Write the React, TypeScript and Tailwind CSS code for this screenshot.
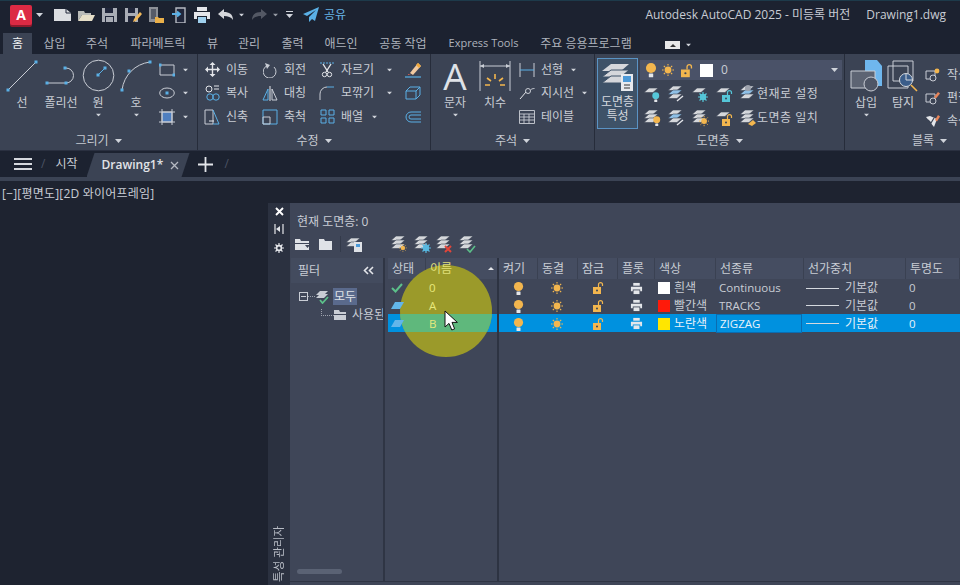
import type { ReactNode } from "react";

const LIGHT = "#e4e6ea";
const LINE = "#c9cdd5";
const BLUE = "#5ab0e6";
const ORANGE = "#f3b64e";

function Svg({ w = 16, h = 16, children }: { w?: number; h?: number; children: ReactNode }) {
  return (
    <svg width={w} height={h} viewBox={`0 0 ${w} ${h}`} fill="none" className="shrink-0">
      {children}
    </svg>
  );
}

function Dot({ x, y }: { x: number; y: number }) {
  return <rect x={x - 1.5} y={y - 1.5} width={3} height={3} fill={BLUE} />;
}

function Caret({ className = "" }: { className?: string }) {
  return (
    <svg width="7" height="4" viewBox="0 0 7 4" className={`shrink-0 ${className}`}>
      <path d="M0 0h7L3.5 4z" fill="#cfd3da" />
    </svg>
  );
}

function Bulb({ x = 0, y = 0, s = 1, c = ORANGE }: { x?: number; y?: number; s?: number; c?: string }) {
  return (
    <g transform={`translate(${x} ${y}) scale(${s})`}>
      <circle cx="5" cy="5" r="4.6" fill={c} />
      <rect x="3" y="10" width="4" height="3.4" rx="0.5" fill={LIGHT} />
    </g>
  );
}

function Sun({ x = 0, y = 0, s = 1, c = ORANGE }: { x?: number; y?: number; s?: number; c?: string }) {
  return (
    <g transform={`translate(${x} ${y}) scale(${s})`}>
      <circle cx="6" cy="6" r="3.4" fill={c} />
      <path d="M6 0v1.6M6 10.4V12M0 6h1.6M10.4 6H12M1.8 1.8l1.2 1.2M9 9l1.2 1.2M10.2 1.8L9 3M3 9l-1.2 1.2" stroke={c} strokeWidth="1.1" />
    </g>
  );
}

function Lock({ x = 0, y = 0, s = 1, c = ORANGE }: { x?: number; y?: number; s?: number; c?: string }) {
  return (
    <g transform={`translate(${x} ${y}) scale(${s})`}>
      <rect x="0" y="5" width="8" height="7" fill={c} />
      <circle cx="4" cy="8.4" r="1" fill="#3b4354" />
      <path d="M5.5 5V2.6a2 2 0 0 1 4 0V4" stroke={c} strokeWidth="1.2" />
    </g>
  );
}

function Printer({ size = 14 }: { size?: number }) {
  return (
    <svg width={size} height={size} viewBox="0 0 14 14" className="shrink-0">
      <path d="M3.5 1h7v3h-7z" fill={LIGHT} />
      <path d="M1 5h12v5h-2V8H3v2H1z" fill={LIGHT} />
      <path d="M3.8 9h6.4v4H3.8z" fill={LIGHT} />
    </svg>
  );
}

// stacked layer sheets, with the overlay badge passed as children
function Stack({ n = 3, tint, children }: { n?: number; tint?: boolean; children?: ReactNode }) {
  const ys = n === 1 ? [3] : n === 2 ? [3, 7] : [1, 5, 9];
  return (
    <Svg w={18} h={18}>
      {ys.map((y, i) => (
        <path
          key={y}
          d={`M6 ${y}h9l-5 4.5H1z`}
          fill={tint && i === 1 ? "#8fc0e6" : "#d5d7db"}
          stroke="#3b4354"
          strokeWidth="0.6"
        />
      ))}
      {children}
    </Svg>
  );
}

function Gear({ x, y, c }: { x: number; y: number; c: string }) {
  return (
    <g>
      <circle cx={x} cy={y} r="3.2" fill={c} />
      <path d={`M${x} ${y - 5}v10M${x - 5} ${y}h10M${x - 3.5} ${y - 3.5}l7 7M${x + 3.5} ${y - 3.5}l-7 7`} stroke={c} strokeWidth="1.2" />
    </g>
  );
}

// --- title bar ---
function QuickAccess() {
  return (
    <div className="flex items-center">
      <div className="ml-[10px] flex h-[20px] w-[22px] items-center justify-center rounded-[2px] bg-[#dc2a44] text-[14px] font-bold text-white shadow-[0_2px_0_#8e1a2c]">
        A
      </div>
      <Caret className="ml-[4px]" />
      <div className="ml-[11px] flex items-center gap-[6.5px]">
        <Svg w={17} h={14}>
          <path d="M0 1h12l5 4v8H0z" fill="#dcdee2" />
          <path d="M12 1v4h5" stroke="#20263a" />
        </Svg>
        <Svg w={17} h={14}>
          <path d="M0 3h6l1 2h6v2H4l-4 6z" fill="#b9bbb8" />
          <path d="M4 7h13l-3 6H0z" fill="#e6dfc8" />
        </Svg>
        <Svg w={17} h={16}>
          <path d="M1 1h15v14H1z" fill="#a9adb5" />
          <path d="M4 1h8v5H4zM4 9h9v6H4z" fill="#20263a" />
          <path d="M5 10h7v5H5z" fill="#a9adb5" />
        </Svg>
        <Svg w={17} h={16}>
          <path d="M0 1h13v14H0z" fill="#a9adb5" />
          <path d="M3 1h7v5H3zM3 9h7v6H3z" fill="#20263a" />
          <path d="M8 15l1-3 6-7 2 2-6 7z" fill="#f0b85a" />
        </Svg>
        <Svg w={16} h={16}>
          <path d="M1 0h9v15H1z" fill="#8d9097" />
          <path d="M3 2h5v10H3z" fill="#565b68" />
          <path d="M7 10h3l1 1h5v5H7z" fill="#eab04a" />
        </Svg>
        <Svg w={16} h={16}>
          <path d="M5 1h9v15H5z" fill="#20263a" stroke="#b5b9c1" strokeWidth="1.4" />
          <path d="M1 7h7M6 4.5L9 7l-3 2.5" stroke={BLUE} strokeWidth="1.8" />
        </Svg>
        <Svg w={18} h={16}>
          <path d="M4 0h10v4H4z" fill={LIGHT} />
          <path d="M1 5h16v7h-3V9H4v3H1z" fill={LIGHT} />
          <path d="M5 10h8v6H5z" fill="#9fd0ee" />
        </Svg>
      </div>
      <div className="ml-[6px]">
        <Svg w={16} h={12}>
          <path d="M0 5l6-5v3c5 0 9 2 9 8-2-3-5-4-9-4v3z" fill="#d5d7db" transform="translate(1 0)" />
        </Svg>
      </div>
      <Caret className="ml-[5px] scale-75" />
      <div className="ml-[7px] opacity-50">
        <Svg w={16} h={12}>
          <path d="M15 5L9 0v3C4 3 0 5 0 11c2-3 5-4 9-4v3z" fill="#8b8f99" />
        </Svg>
      </div>
      <Caret className="ml-[4px] scale-75 opacity-70" />
      <div className="ml-[7px] flex flex-col items-center gap-[2px]">
        <span className="h-[1.5px] w-[7px] bg-[#cfd3da]" />
        <Caret />
      </div>
      <div className="ml-[10px]">
        <Svg w={16} h={15}>
          <path d="M16 0L0 7l4 2 9-6-7 7v5l3-3 3 2z" fill="#5ab0e6" />
        </Svg>
      </div>
      <span className="ml-[5px] text-[12px] text-[#66b4e6]">공유</span>
    </div>
  );
}

function TitleBar() {
  return (
    <div className="flex h-[33px] items-center justify-between border-t border-[#1d3a4a] bg-[#1c2230] pb-[5px]">
      <QuickAccess />
      <div className="flex pr-[14px] text-[12px] text-[#c8ccd4]">
        <span>Autodesk AutoCAD 2025 - 미등록 버전</span>
        <span className="ml-[16px]">Drawing1.dwg</span>
      </div>
    </div>
  );
}

const tabs = [
  { label: "홈", cls: "ml-[3px] w-[29px] bg-[#3b4354] text-[#eef0f3]" },
  { label: "삽입", cls: "ml-[11px] w-[23px]" },
  { label: "주석", cls: "ml-[20px] w-[22px]" },
  { label: "파라메트릭", cls: "ml-[21px] w-[58px]" },
  { label: "뷰", cls: "ml-[20px] w-[11px]" },
  { label: "관리", cls: "ml-[20px] w-[22px]" },
  { label: "출력", cls: "ml-[21px] w-[23px]" },
  { label: "애드인", cls: "ml-[20px] w-[34px]" },
  { label: "공동 작업", cls: "ml-[20px] w-[50px]" },
  { label: "Express Tools", cls: "ml-[21px] w-[69px] text-[11px]" },
  { label: "주요 응용프로그램", cls: "ml-[19px] w-[98px]" },
];

function RibbonTabs() {
  return (
    <div className="flex h-[21px] items-stretch bg-[#1c2230] text-[12px] text-[#aeb3bd]">
      {tabs.map((t) => (
        <div key={t.label} className={`flex items-center justify-center whitespace-nowrap ${t.cls}`}>
          {t.label}
        </div>
      ))}
      <div className="ml-[30px] mt-[8px] flex h-[8px] w-[15px] items-center justify-center bg-[#e8e8e8]">
        <span className="h-0 w-0 border-x-[3px] border-b-[3px] border-x-transparent border-b-[#333]" />
      </div>
      <Caret className="ml-[5px] mt-[10px] scale-75" />
    </div>
  );
}

// --- ribbon ---
function Panel({ title, cls, children }: { title: string; cls: string; children: ReactNode }) {
  return (
    <div className={`flex shrink-0 flex-col border-r border-[#262c3a] ${cls}`}>
      <div className="flex h-[78px]">{children}</div>
      <div className="flex h-[18px] items-center justify-center gap-[6px] text-[12px] text-[#c5c9d1]">
        {title}
        <Caret />
      </div>
    </div>
  );
}

function BigTool({ cls, icon, label, caret }: { cls: string; icon: ReactNode; label: string; caret?: boolean }) {
  return (
    <div className={`flex shrink-0 flex-col items-center ${cls}`}>
      <div className="flex h-[33px] items-center">{icon}</div>
      <span className="mt-[3px] whitespace-nowrap text-[12px] leading-[15px] text-[#c9cdd5]">{label}</span>
      {caret && <Caret className="mt-[3px] scale-75" />}
    </div>
  );
}

function Row({ icon, text, caret, caretCls = "" }: { icon: ReactNode; text?: string; caret?: boolean; caretCls?: string }) {
  return (
    <div className="flex h-[23.5px] items-center">
      <div className="flex w-[18px] justify-center">{icon}</div>
      {text && <span className="ml-[5px] whitespace-nowrap text-[12px] text-[#c9cdd5]">{text}</span>}
      {caret && <Caret className={`scale-75 ${caretCls}`} />}
    </div>
  );
}

function DrawPanel() {
  return (
    <Panel title="그리기" cls="w-[198px]">
      <div className="flex pt-[5px]">
        <BigTool
          cls="ml-[5px] w-[34px]"
          label="선"
          icon={
            <Svg w={32} h={32}>
              <path d="M2 30L30 2" stroke={LINE} strokeWidth="1" />
              <Dot x={2} y={30} />
              <Dot x={30} y={2} />
            </Svg>
          }
        />
        <BigTool
          cls="ml-[4px] w-[36px]"
          label="폴리선"
          icon={
            <Svg w={34} h={20}>
              <path d="M3 17h19a7.5 7.5 0 0 0 0-15h-2" stroke={LINE} />
              <Dot x={3} y={17} />
              <Dot x={22} y={17} />
              <Dot x={21} y={2} />
            </Svg>
          }
        />
        <BigTool
          cls="ml-[1px] w-[36px]"
          label="원"
          caret
          icon={
            <Svg w={33} h={33}>
              <circle cx="16.5" cy="16.5" r="15.3" stroke={LINE} />
              <path d="M16 16l7-7" stroke={BLUE} />
              <Dot x={16} y={16} />
              <Dot x={23} y={9} />
            </Svg>
          }
        />
        <BigTool
          cls="ml-[2px] w-[36px]"
          label="호"
          caret
          icon={
            <Svg w={32} h={32}>
              <path d="M2 30C4 15 15 4 30 2" stroke={LINE} />
              <Dot x={2} y={30} />
              <Dot x={9} y={11} />
              <Dot x={30} y={2} />
            </Svg>
          }
        />
      </div>
      <div className="ml-[4px] flex flex-col pt-[4px]">
        <Row
          caret
          caretCls="ml-[6px]"
          icon={
            <Svg w={16} h={14}>
              <path d="M1 2h14v10H1z" stroke={LINE} />
              <Dot x={1} y={2} />
              <Dot x={15} y={12} />
            </Svg>
          }
        />
        <Row
          caret
          caretCls="ml-[6px]"
          icon={
            <Svg w={16} h={12}>
              <ellipse cx="8" cy="6" rx="7.3" ry="5" stroke={LINE} />
              <Dot x={8} y={6} />
            </Svg>
          }
        />
        <Row
          caret
          caretCls="ml-[6px]"
          icon={
            <Svg w={16} h={16}>
              <path d="M3 3h10v10H3z" fill="#4f7fc0" stroke={LINE} />
              <path d="M0 3h16M0 13h16M3 0v16M13 0v16" stroke={LINE} />
            </Svg>
          }
        />
      </div>
    </Panel>
  );
}

function ModifyPanel() {
  return (
    <Panel title="수정" cls="w-[233px]">
      <div className="flex pl-[5px] pt-[4px]">
        <div className="w-[58px]">
          <Row
            text="이동"
            icon={
              <Svg w={15} h={15}>
                <path d="M7.5 0l3 3h-6zM7.5 15l-3-3h6zM0 7.5l3-3v6zM15 7.5l-3 3v-6z" fill={LIGHT} />
                <path d="M7.5 2v11M2 7.5h11" stroke={LIGHT} strokeWidth="1.4" />
              </Svg>
            }
          />
          <Row
            text="복사"
            icon={
              <Svg w={15} h={16}>
                <circle cx="4" cy="4" r="3" stroke={LIGHT} />
                <circle cx="5" cy="12" r="3.2" stroke={BLUE} />
                <circle cx="11" cy="12" r="3.2" stroke={BLUE} />
                <path d="M9 1h5M9 4h5" stroke={LIGHT} />
              </Svg>
            }
          />
          <Row
            text="신축"
            icon={
              <Svg w={16} h={16}>
                <path d="M1 1h8v14H1z" stroke={LINE} />
                <path d="M9 1l6 14H9" stroke={BLUE} />
                <path d="M5 12h5" stroke={LIGHT} />
              </Svg>
            }
          />
        </div>
        <div className="w-[57px]">
          <Row
            text="회전"
            icon={
              <Svg w={15} h={16}>
                <path d="M11 5a6.4 6.4 0 1 1-7-1.2" stroke={LINE} />
                <path d="M2 1l5 2-3 4z" fill={LINE} />
              </Svg>
            }
          />
          <Row
            text="대칭"
            icon={
              <Svg w={16} h={15}>
                <path d="M6 3L1 14h5z" stroke={BLUE} />
                <path d="M10 3l5 11h-5z" stroke={LINE} />
                <path d="M8 0v15" stroke={LIGHT} />
              </Svg>
            }
          />
          <Row
            text="축척"
            icon={
              <Svg w={16} h={16}>
                <path d="M1 1h14v14H1z" stroke={BLUE} />
                <path d="M1 8h7v7H1z" stroke={LINE} />
              </Svg>
            }
          />
        </div>
        <div className="w-[84px]">
          <Row
            text="자르기"
            caret
            caretCls="ml-[12px]"
            icon={
              <Svg w={16} h={16}>
                <path d="M1 1h14" stroke={BLUE} strokeDasharray="2 1" />
                <path d="M4 2l5 8M12 2L7 10" stroke={LIGHT} strokeWidth="1.4" />
                <circle cx="5.5" cy="12.5" r="2.2" stroke={LIGHT} />
                <circle cx="10.5" cy="12.5" r="2.2" stroke={LIGHT} />
              </Svg>
            }
          />
          <Row
            text="모깎기"
            caret
            caretCls="ml-[12px]"
            icon={
              <Svg w={16} h={16}>
                <path d="M1 15V9a7 7 0 0 1 7-7" stroke={LINE} />
                <path d="M8 2h7" stroke={BLUE} />
              </Svg>
            }
          />
          <Row
            text="배열"
            caret
            caretCls="ml-[8px]"
            icon={
              <Svg w={15} h={15}>
                <path d="M1 1h5v5H1zM9 1h5v5H9zM1 9h5v5H1zM9 9h5v5H9z" stroke={BLUE} />
              </Svg>
            }
          />
        </div>
        <div className="ml-[2px] w-[20px]">
          <Row
            icon={
              <Svg w={16} h={16}>
                <path d="M5 11L13 1l3 3-8 9z" fill="#f0c9a0" />
                <path d="M11 3l3 3 2-2-3-3z" fill="#f0a83a" />
                <path d="M3 12l3 1H3z" fill="#e25a4a" />
                <path d="M0 15h16" stroke={BLUE} strokeWidth="1.2" />
              </Svg>
            }
          />
          <Row
            icon={
              <Svg w={16} h={14}>
                <path d="M1 5h10v8H1zM1 5l4-4h10v8l-4 4M11 5l4-4" stroke={BLUE} />
              </Svg>
            }
          />
          <Row
            icon={
              <Svg w={16} h={12}>
                <path d="M16 1H6a5 5 0 0 0 0 10h10M16 4H6a2 2 0 0 0 0 4h10" stroke={BLUE} />
              </Svg>
            }
          />
        </div>
      </div>
    </Panel>
  );
}

function AnnotatePanel() {
  return (
    <Panel title="주석" cls="w-[164px]">
      <div className="flex pt-[5px]">
        <BigTool
          cls="ml-[7px] w-[34px]"
          label="문자"
          caret
          icon={<span className="text-[37px] leading-[28px] text-[#dfe2e7]">A</span>}
        />
        <BigTool
          cls="ml-[6px] w-[34px]"
          label="치수"
          icon={
            <Svg w={32} h={32}>
              <path d="M1 1v30M31 1v30M1 6h30" stroke={LINE} />
              <path d="M1 6l4-2v4zM31 6l-4-2v4z" fill={LINE} />
              <path d="M16 14v5M8 18l4 3M24 18l-4 3M6 25h5M21 25h5" stroke={ORANGE} strokeWidth="1.6" />
            </Svg>
          }
        />
      </div>
      <div className="ml-[6px] flex flex-col pt-[4px]">
        <Row
          text="선형"
          caret
          caretCls="ml-[7px]"
          icon={
            <Svg w={16} h={14}>
              <path d="M1 0v14M15 0v14" stroke={LINE} />
              <path d="M1 7h14" stroke={BLUE} />
            </Svg>
          }
        />
        <Row
          text="지시선"
          caret
          caretCls="ml-[7px]"
          icon={
            <Svg w={16} h={14}>
              <path d="M1 13l6-7" stroke={LIGHT} />
              <circle cx="9" cy="5" r="2.5" stroke={LINE} />
              <path d="M11.5 4c1-1 2-1.5 4-1.5" stroke={LINE} />
            </Svg>
          }
        />
        <Row
          text="테이블"
          icon={
            <Svg w={16} h={14}>
              <path d="M.5.5h15v13H.5zM.5 4h15M.5 7h15M.5 10h15M5 4v9.5M10 4v9.5" stroke={LINE} strokeWidth="0.9" />
            </Svg>
          }
        />
      </div>
    </Panel>
  );
}

function LayerPanel() {
  return (
    <Panel title="도면층" cls="w-[250px]">
      <div className="ml-[2px] mt-[4px] flex h-[71px] w-[41px] flex-col items-center border border-[#5a93c4] bg-[#3e5268] pt-[3px]">
        <Svg w={32} h={30}>
          <path d="M9 2h18l-8 7H0z" fill="#d5d7db" />
          <path d="M9 8h18l-8 7H0z" fill="#d5d7db" stroke="#3e5268" />
          <path d="M9 14h18l-8 7H0z" fill="#d5d7db" stroke="#3e5268" />
          <path d="M19 12h12v17H19z" fill="#e8eaee" />
          <path d="M21 14h8v6h-8z" fill="#4d9ad8" />
          <path d="M22 23h6M22 26h6" stroke="#333" />
        </Svg>
        <span className="mt-[3px] text-[12px] leading-[14px] text-[#d5d9df]">도면층</span>
        <span className="text-[12px] leading-[14px] text-[#d5d9df]">특성</span>
      </div>
      <div className="ml-[2px] mt-[6px] flex flex-col">
        <div className="flex h-[20px] w-[202px] items-center bg-[#4a5268] pl-[5px] pr-[4px]">
          <Svg w={55} h={16}>
            <Bulb x={0.5} y={0.5} s={1.1} />
            <Sun x={17} y={2} />
            <Lock x={36} y={2} s={1.1} />
          </Svg>
          <span className="h-[13px] w-[13px] bg-white" />
          <span className="ml-[8px] flex-1 text-[12px] text-[#c9cdd5]">0</span>
          <Caret />
        </div>
        <div className="mt-[2px] flex h-[24px] items-center gap-[6px] pl-[3px]">
          <Stack n={1}>
            <Bulb x={9} y={7} s={0.75} c="#55c6d8" />
          </Stack>
          <Stack tint>
            <path d="M10 16l6-5" stroke={LIGHT} strokeWidth="1.4" />
          </Stack>
          <Stack n={1}>
            <Gear x={12} y={12} c="#55c6d8" />
          </Stack>
          <Stack n={1}>
            <Lock x={7} y={5} c="#55c6d8" />
          </Stack>
          <Stack tint>
            <circle cx="9" cy="3" r="3" fill="#9ea3ad" />
          </Stack>
          <span className="ml-[-6px] whitespace-nowrap text-[12px] tracking-[0.5px] text-[#c9cdd5]">현재로 설정</span>
        </div>
        <div className="flex h-[24px] items-center gap-[6px] pl-[3px]">
          <Stack>
            <Bulb x={10} y={7} s={0.75} />
          </Stack>
          <Stack tint>
            <path d="M10 16l6-5" stroke={LIGHT} strokeWidth="1.4" />
          </Stack>
          <Stack>
            <Sun x={8} y={7} s={0.85} />
          </Stack>
          <Stack n={1}>
            <Lock x={7} y={5} />
          </Stack>
          <Stack>
            <path d="M9 15l5-4 3 3-4 3z" fill={ORANGE} />
          </Stack>
          <span className="ml-[-6px] whitespace-nowrap text-[12px] tracking-[0.5px] text-[#c9cdd5]">도면층 일치</span>
        </div>
      </div>
    </Panel>
  );
}

function BlockPanel() {
  const base = (
    <>
      <path d="M1 3h9v8H1z" stroke={LINE} />
      <circle cx="8" cy="10" r="3" fill="#3b4354" stroke={LINE} />
    </>
  );
  return (
    <div className="flex w-[120px] shrink-0 flex-col">
      <div className="flex h-[78px] pt-[5px]">
        <BigTool
          cls="ml-[4px] w-[34px]"
          label="삽입"
          caret
          icon={
            <Svg w={33} h={32}>
              <path d="M15 0h12l5 6v20H15z" fill="#6fb7ee" />
              <path d="M1 11h24v17H1z" fill="#5d6473" stroke={LINE} />
              <circle cx="21" cy="24" r="7" fill="#4f5666" stroke={LINE} />
            </Svg>
          }
        />
        <BigTool
          cls="ml-[2px] w-[36px]"
          label="탐지"
          icon={
            <Svg w={32} h={32}>
              <path d="M6 1h20v20H6zM1 6h20v22H1z" stroke={LINE} />
              <circle cx="19" cy="20" r="6.5" fill="#3b5d8a" stroke="#d5d9df" />
              <path d="M19 14v6h6" fill="none" stroke="#d5d9df" />
              <path d="M24 25l6 6" stroke={ORANGE} strokeWidth="1.6" />
            </Svg>
          }
        />
        <div className="ml-[3px] flex flex-col pt-[4px]">
          <Row
            text="작성"
            icon={
              <Svg w={16} h={14}>
                {base}
                <circle cx="12" cy="3" r="2.4" fill={ORANGE} />
              </Svg>
            }
          />
          <Row
            text="편집"
            icon={
              <Svg w={16} h={14}>
                {base}
                <path d="M9 6l4-5 2 1.5-4 5z" fill="#e8855a" />
              </Svg>
            }
          />
          <Row
            text="속성"
            icon={
              <Svg w={16} h={14}>
                <path d="M1 3l4-1 7 3-3 8z" fill={LIGHT} />
                <path d="M3 6l3 3 3-5" stroke="#3b4354" strokeWidth="1.2" />
                <path d="M10 6l3-5 2 1.5-3 5z" fill="#e8855a" />
              </Svg>
            }
          />
        </div>
      </div>
      <div className="flex h-[18px] items-center gap-[6px] pl-[67px] text-[12px] text-[#c5c9d1]">
        블록
        <Caret />
      </div>
    </div>
  );
}

function Ribbon() {
  return (
    <div className="flex h-[96px] overflow-hidden bg-[#3b4354]">
      <DrawPanel />
      <ModifyPanel />
      <AnnotatePanel />
      <LayerPanel />
      <BlockPanel />
    </div>
  );
}

function DocTabs() {
  return (
    <div className="flex h-[27px] items-stretch border-t border-[#2a3040] bg-[#1c2230] text-[12px] text-[#c9cdd5]">
      <div className="ml-[14px] flex w-[18px] flex-col justify-center gap-[3px]">
        <span className="h-[2px] bg-[#d5d8de]" />
        <span className="h-[2px] bg-[#d5d8de]" />
        <span className="h-[2px] bg-[#d5d8de]" />
      </div>
      <span className="ml-[9px] self-center text-[#4b5264]">/</span>
      <span className="ml-[10px] self-center text-[12px]">시작</span>
      <div className="ml-[9px] mt-[2px] flex w-[103px] items-center bg-[#3b4354] pl-[15px] font-semibold text-[#e2e4e8] [clip-path:polygon(8px_0,100%_0,calc(100%-8px)_100%,0_100%)]">
        Drawing1*
        <span className="ml-[7px]">
          <Svg w={9} h={9}>
            <path d="M1 1l7 7M8 1L1 8" stroke="#b5b9c2" strokeWidth="1.3" />
          </Svg>
        </span>
      </div>
      <div className="ml-[8px] flex items-center">
        <Svg w={15} h={15}>
          <path d="M7.5 0v15M0 7.5h15" stroke="#e4e6ea" strokeWidth="1.8" />
        </Svg>
      </div>
      <span className="ml-[12px] self-center text-[#4b5264]">/</span>
    </div>
  );
}

// --- layer palette ---
const headers = ["상태", "이름", "켜기", "동결", "잠금", "플롯", "색상", "선종류", "선가중치", "투명도"];

const layers = [
  { name: "0", color: "bg-white", colorName: "흰색", linetype: "Continuous", mark: "check" },
  { name: "A", color: "bg-[#ff1a0a]", colorName: "빨간색", linetype: "TRACKS", mark: "layer" },
  { name: "B", color: "bg-[#ffe600]", colorName: "노란색", linetype: "ZIGZAG", mark: "layer", selected: true },
];

function LayerRow({ row }: { row: (typeof layers)[number] }) {
  return (
    <div
      className={`grid h-[17.5px] grid-cols-[38px_73px_39px_40px_40px_37px_61px_88px_102px_54px] items-center text-[12px] text-[#c9cdd5] ${
        row.selected ? "bg-[#0091df] text-[#e8f2fa]" : ""
      }`}
    >
      <div className="relative z-20 flex justify-center pr-[20px]">
        {row.mark === "check" ? (
          <Svg w={12} h={10}>
            <path d="M1 5l3.5 3.5L11 1" stroke="#5cc08a" strokeWidth="2" />
          </Svg>
        ) : (
          <Svg w={13} h={7}>
            <path d="M4 0h9L9 7H0z" fill="#62b6ea" />
          </Svg>
        )}
      </div>
      <div className="flex h-full items-center border-r-2 border-[#2d3342] pl-[3px]">
        <span className="relative z-20 text-[11.5px] text-[#e8e87c]">{row.name}</span>
      </div>
      <div className="flex justify-center">
        <Svg w={11} h={14}>
          <Bulb x={0.5} y={0.5} />
        </Svg>
      </div>
      <div className="flex justify-center pr-[2px]">
        <Svg w={12} h={12}>
          <Sun />
        </Svg>
      </div>
      <div className="flex justify-center">
        <Svg w={11} h={12}>
          <Lock />
        </Svg>
      </div>
      <div className="flex justify-center">
        <Printer size={13} />
      </div>
      <div className="flex items-center pl-[3px]">
        <span className={`h-[12px] w-[12px] ${row.color}`} />
        <span className="ml-[4px] whitespace-nowrap">{row.colorName}</span>
      </div>
      <div className={`flex h-full items-center pl-[3px] text-[11.5px] ${row.selected ? "mr-[2px] border border-[#0b6cb0]" : ""}`}>
        {row.linetype}
      </div>
      <div className="flex items-center">
        <span className="ml-[2px] h-px w-[33px] bg-[#d5d9df]" />
        <span className="ml-[6px]">기본값</span>
      </div>
      <div className="pl-[3px] text-[11.5px]">0</div>
    </div>
  );
}

function FilterTree() {
  return (
    <div className="relative w-[94px] shrink-0 border-r-2 border-[#2f3544]">
      <div className="flex h-[25px] items-center justify-between bg-[#434b5e] pl-[7px] pr-[9px] text-[12px] text-[#c9cdd5]">
        필터
        <Svg w={11} h={9}>
          <path d="M5 1L1.5 4.5 5 8M10 1L6.5 4.5 10 8" stroke={LIGHT} strokeWidth="1.6" />
        </Svg>
      </div>
      <div className="flex items-center pl-[8px] pt-[5px]">
        <span className="flex h-[9px] w-[9px] items-center justify-center border border-[#c9cdd5]">
          <span className="h-px w-[5px] bg-[#c9cdd5]" />
        </span>
        <span className="h-0 w-[7px] border-t border-dotted border-[#9da2ad]" />
        <Svg w={15} h={14}>
          <path d="M5 1h8l-4 4H1zM5 4h8l-4 4H1z" fill="#c9cdd5" />
          <path d="M5 10l2.5 3L13 7" stroke="#5cc08a" strokeWidth="1.8" />
        </Svg>
        <span className="ml-[3px] bg-[#5a6a8c] px-px text-[12px] leading-[17px] text-[#dfe2e7]">모두</span>
      </div>
      <div className="ml-[30px] mt-[1px] flex h-[18px] items-center overflow-hidden">
        <span className="mb-[6px] h-[7px] w-[13px] shrink-0 border-b border-l border-dotted border-[#9da2ad]" />
        <Svg w={13} h={12}>
          <path d="M0 1h5l1 2h6v2H0zM0 6h12v5H0z" fill="#c9cdd5" />
        </Svg>
        <span className="ml-[5px] whitespace-nowrap text-[12px] text-[#c9cdd5]">사용된 도면층</span>
      </div>
      <div className="absolute bottom-[7px] left-[6px] h-[5px] w-[45px] rounded-full bg-[#5a6274]" />
    </div>
  );
}

function LayerTable() {
  return (
    <div className="ml-[3px] flex min-w-0 flex-1 flex-col">
      <div className="grid h-[21px] shrink-0 grid-cols-[38px_73px_39px_40px_40px_37px_61px_88px_102px_54px] text-[12px] text-[#c9cdd5]">
        {headers.map((h) => (
          <div
            key={h}
            className={`flex items-center justify-between border-r border-[#3a4152] bg-[#454d61] pl-[4px] ${
              h === "이름" ? "border-r-2 border-r-[#2d3342] pr-[3px]" : ""
            }`}
          >
            <span className={`relative z-20 whitespace-nowrap ${h === "이름" ? "text-[#e0e07c]" : ""}`}>{h}</span>
            {h === "이름" && <span className="h-0 w-0 border-x-[3px] border-b-[3px] border-x-transparent border-b-[#e4e6ea]" />}
          </div>
        ))}
      </div>
      {layers.map((row) => (
        <LayerRow key={row.name} row={row} />
      ))}
      <div className="flex flex-1">
        <div className="w-[111px] border-r-2 border-[#2d3342]" />
      </div>
    </div>
  );
}

function Palette() {
  return (
    <div className="relative ml-[268px] flex min-h-0 flex-1">
      <div className="flex w-[22px] shrink-0 flex-col items-center bg-[#2b3140] pt-[4px]">
        <Svg w={9} h={9}>
          <path d="M1 1l7 7M8 1L1 8" stroke="#fff" strokeWidth="1.9" />
        </Svg>
        <div className="mt-[8px]">
          <Svg w={10} h={10}>
            <path d="M1 0v10M9 0v10" stroke={LIGHT} strokeWidth="1.2" />
            <path d="M2 5l4-3v6z" fill={LIGHT} />
          </Svg>
        </div>
        <div className="mt-[8px]">
          <Svg w={12} h={12}>
            <Gear x={6} y={6} c={LIGHT} />
            <circle cx="6" cy="6" r="1.6" fill="#2b3140" />
          </Svg>
        </div>
        <span className="mb-[3px] mt-auto rotate-180 whitespace-nowrap text-[11.5px] leading-[14px] text-[#b9bdc6] [text-orientation:sideways] [writing-mode:vertical-rl]">
          특성 관리자
        </span>
      </div>
      <div className="flex min-w-0 flex-1 flex-col bg-[#3f4658] pb-[3px]">
        <div className="h-[55px] shrink-0 pl-[7px] pt-[11px]">
          <p className="text-[12px] leading-[16px] text-[#c9cdd5]">현재 도면층: 0</p>
          <div className="-ml-[2px] mt-[5px] flex items-center">
            <Svg w={15} h={13}>
              <path d="M0 1h5l1 2h8v2H0zM0 6h14v6H0z" fill="#dfe2e7" />
              <path d="M10 7h5l-2.5 3z" fill="#3f4658" />
            </Svg>
            <div className="ml-[9px]">
              <Svg w={13} h={12}>
                <path d="M0 1h5l1 2h7v9H0z" fill="#dfe2e7" />
              </Svg>
            </div>
            <span className="ml-[8px] h-[16px] w-px bg-[#333a4a]" />
            <div className="ml-[4px]">
              <Stack n={2}>
                <path d="M9 7h8v10H9z" fill="#dfe2e7" />
                <path d="M11 9h4v3h-4z" fill="#4d9ad8" />
              </Stack>
            </div>
            <div className="ml-[27px] flex gap-[4.5px]">
              <Stack>
                <Sun x={9} y={9} s={0.65} />
              </Stack>
              <Stack>
                <Gear x={13} y={13} c="#58b8e0" />
              </Stack>
              <Stack>
                <path d="M10 11l6 6M16 11l-6 6" stroke="#e2453a" strokeWidth="2" />
              </Stack>
              <Stack>
                <path d="M9 14l3 3 5-6" stroke="#5cc08a" strokeWidth="1.6" />
              </Stack>
            </div>
          </div>
        </div>
        <div className="flex min-h-0 flex-1 border-b border-[#2f3544] pl-px">
          <FilterTree />
          <LayerTable />
        </div>
      </div>
      {/* click highlight around the cursor */}
      <div className="absolute left-[132px] top-[62px] z-10 h-[92px] w-[92px] overflow-hidden rounded-full bg-[#9b9a2a] blur-[0.6px]">
        <div className="mt-[49px] h-[17.5px] bg-[#5fb87c]" />
      </div>
      <svg width="16" height="22" viewBox="0 0 16 22" className="absolute left-[176px] top-[107px] z-30">
        <path d="M1 1v16l4-3.6 2.8 6.6 2.8-1.2L8 12.4h5.4z" fill="#fff" stroke="#111" strokeWidth="1" />
      </svg>
    </div>
  );
}

function Canvas() {
  return (
    <div className="flex min-h-0 flex-1 flex-col bg-[#1e2330]">
      <div className="flex h-[21px] shrink-0 items-end pl-[2px] text-[12px] leading-[16px] tracking-[0.2px] text-[#c9cdd5]">[−][평면도][2D 와이어프레임]</div>
      <div className="h-px shrink-0" />
      <Palette />
    </div>
  );
}

export default function App() {
  return (
    <div className="flex h-[585px] w-[960px] flex-col overflow-hidden bg-[#1c2230] font-['Open_Sans','Noto_Sans_CJK_KR',sans-serif]">
      <TitleBar />
      <RibbonTabs />
      <Ribbon />
      <DocTabs />
      <div className="h-[4px] shrink-0 bg-[#3b4354]" />
      <Canvas />
    </div>
  );
}
